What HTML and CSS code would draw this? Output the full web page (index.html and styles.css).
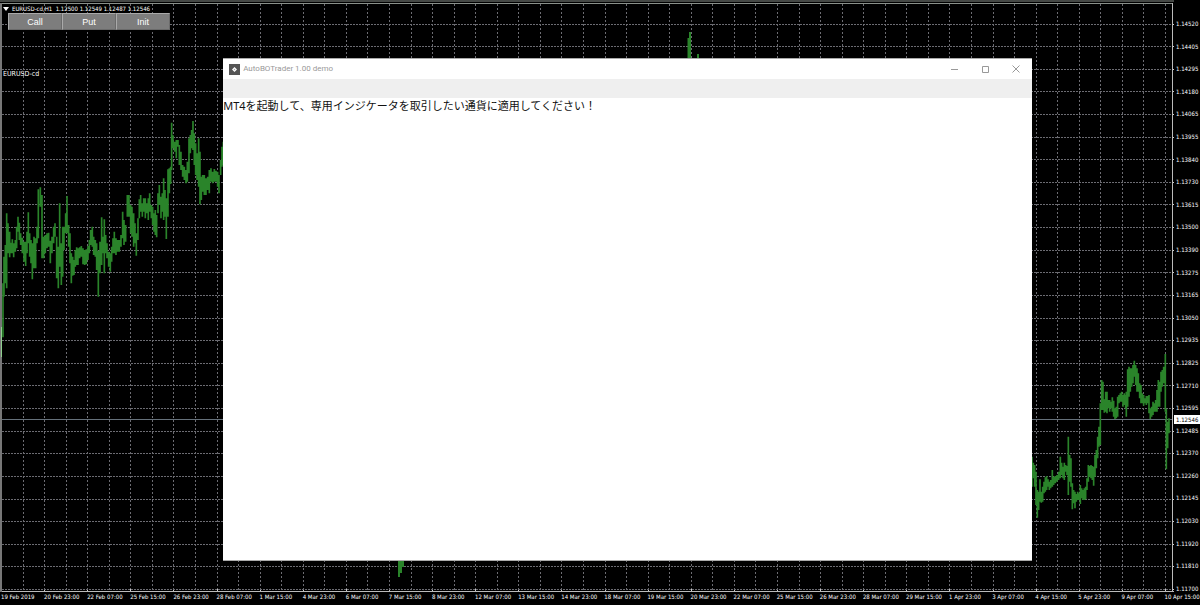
FILE: index.html
```html
<!DOCTYPE html>
<html lang="ja">
<head>
  <meta charset="UTF-8">
  <meta name="viewport" content="width=device-width, initial-scale=1.0">
  <title>AutoBOTrader 1.00 demo</title>
  <link rel="stylesheet" href="styles.css">
</head>
<body>
  <main class="terminal">
    <svg class="plot" viewBox="0 0 1174 592" preserveAspectRatio="none" aria-hidden="true">
      <g id="grid"></g>
      <path class="price-line" d="M2 419.5H1173"/>

      <!-- H1 bars, left part -->
      <g class="bars" transform="translate(0 110) scale(.3333)">
        <path d="M9 520V682M12 440V560M16 405V520M20 310V535M24 340V430M29 365V442M33 398V430M37 388V430M41 400V442M46 390V425M50 350V415M54 320V365M58 338V390M62 370V405M67 383V430M72 395V455M77 395V468M81 365V430M85 307V400M89 370V440M93 390V460M97 400V508M102 380V475M107 385V475M111 350V400M115 238V385M121 232V290M126 255V445M131 380V445M136 375V430M141 370V415M146 368V410M151 392V460M156 380V430M161 350V400M165 340V380M170 380V505M175 410V535M179 280V470M184 400V525M188 350V500M192 350V420M197 310V370M201 258V370M206 345V410M210 370V460M214 430V520M218 440V497M222 450V495M226 420V470M230 412V465M234 415V465M239 412V445M244 408V440M249 415V463M254 420V465M259 418V463M264 408V450M268 390V430M272 360V405M277 350V410M281 380V435M286 390V440M290 400V480M295 422V560M300 395V490M305 322V465M309 380V430M313 328V490M317 375V430M321 400V445M326 425V470M331 430V485M335 410V455M339 385V430M343 365V430M348 385V435M353 390V425M358 390V425M363 375V410M368 305V385M372 330V405M377 345V395M382 255V320M387 255V320M392 285V370M396 290V380M401 310V410M405 340V400M409 370V437M414 325V390M418 268V325M422 255V305M427 280V320M431 265V305M436 265V325M440 280V310M445 265V330M449 250V305M454 285V325M458 290V345M462 310V365M466 300V375M470 315V382M474 250V310M478 225V285M483 260V325M487 250V305M491 205V330M495 240V320M499 265V387M504 178V320M508 175V250M512 170V222M515 38V180M519 76V115M524 95V125M529 90V145M534 90V110M538 105V165M543 125V180M548 165V200M553 170V210M558 180V220M562 155V215M567 85V190M571 75V130M575 60V115M579 33V120M583 70V165M587 100V195M591 130V210M596 85V230M600 125V283M604 200V270M608 195V245M613 195V255M618 205V255M623 200V240M628 180V250M633 175V215M638 185V220M643 177V215M648 182V215M653 185V230M657 195V250M662 150V195M666 110V170M670 95V165"/>
      </g>

      <!-- H1 bars that stick out above and below the trader window -->
      <g class="bars">
        <path d="M688.5 38V60M690 32V60M698 54V60"/>
        <path d="M399 560V577M401 560V573M403 560V567"/>
      </g>

      <!-- H1 bars, right part -->
      <g class="bars" transform="translate(1020 340) scale(.3333)">
        <path d="M36 350V440M40 368V415M44 375V440M48 395V495M52 450V533M56 455V510M60 418V485M64 455V488M68 440V485M72 425V460M76 412V455M80 408V450M84 418V440M88 425V450M92 420V445M97 390V440M101 410V435M106 408V430M111 405V425M116 395V420M121 350V415M125 368V405M129 380V415M133 368V420M137 375V395M141 378V405M145 290V465M149 345V425M153 355V440M157 430V508M161 450V490M165 455V505M169 462V485M173 455V480M177 460V480M181 435V492M185 445V475M189 450V480M193 445V480M197 440V478M201 415V450M205 375V425M209 378V410M213 375V415M217 378V420M221 380V437M225 345V410M229 330V385M233 290V355M237 260V320M241 190V315M245 120V210M249 125V210M253 178V218M257 155V215M261 155V220M265 180V205M269 180V215M273 185V205M277 172V215M281 182V230M285 205V237M289 200V235M293 170V230M297 165V190M301 160V185M305 155V185M309 165V200M313 160V195M317 165V205M319 155V230M323 88V200M327 80V170M331 85V155M335 85V140M339 75V130M343 62V110M347 75V135M351 85V155M355 100V155M359 130V175M363 135V190M367 160V190M371 165V197M375 175V190M379 168V195M383 168V190M387 165V220M391 205V237M395 200V230M399 185V225M403 190V215M407 180V215M411 150V215M415 120V200M419 125V200M423 95V155M427 90V140M431 80V130M436 42V215M439 207V388M443 245V325M447 235V280"/>
      </g>

      <path class="frame-left" d="M1 3V592"/>
      <path class="first-bar" d="M1.5 327V357"/>
      <path class="frame-top" d="M0 1H1174M2 3.5H1173"/>
      <path class="frame-axis" d="M1172.5 3V592M2 591.5H1174"/>
    </svg>

    <div class="price-axis">
      <span>1.14520</span><span>1.14405</span><span>1.14295</span><span>1.14180</span><span>1.14065</span>
      <span>1.13955</span><span>1.13840</span><span>1.13730</span><span>1.13615</span><span>1.13500</span>
      <span>1.13390</span><span>1.13275</span><span>1.13165</span><span>1.13050</span><span>1.12935</span>
      <span>1.12825</span><span>1.12710</span><span>1.12595</span><span>1.12485</span><span>1.12370</span>
      <span>1.12260</span><span>1.12145</span><span>1.12030</span><span>1.11920</span><span>1.11810</span>
      <span>1.11700</span>
      <strong class="current-price">1.12546</strong>
    </div>

    <div class="time-axis">
      <span>19 Feb 2019</span><span>20 Feb 23:00</span><span>22 Feb 07:00</span><span>25 Feb 15:00</span>
      <span>26 Feb 23:00</span><span>28 Feb 07:00</span><span>1 Mar 15:00</span><span>4 Mar 23:00</span>
      <span>6 Mar 07:00</span><span>7 Mar 15:00</span><span>8 Mar 23:00</span><span>12 Mar 07:00</span>
      <span>13 Mar 15:00</span><span>14 Mar 23:00</span><span>18 Mar 07:00</span><span>19 Mar 15:00</span>
      <span>20 Mar 23:00</span><span>22 Mar 07:00</span><span>25 Mar 15:00</span><span>26 Mar 23:00</span>
      <span>28 Mar 07:00</span><span>29 Mar 15:00</span><span>1 Apr 23:00</span><span>3 Apr 07:00</span>
      <span>4 Apr 15:00</span><span>5 Apr 23:00</span><span>9 Apr 07:00</span><span>10 Apr 15:00</span>
    </div>

    <div class="chart-overlay">
      <div class="chart-title">
        <svg width="6" height="4" viewBox="0 0 6 4" aria-hidden="true"><path d="M0 0H6L3 4Z" fill="#fff"/></svg>
        <span>EURUSD-cd,H1&nbsp; 1.12500 1.12549 1.12487 1.12546</span>
      </div>
      <div class="chart-buttons">
        <button type="button">Call</button>
        <button type="button">Put</button>
        <button type="button">Init</button>
      </div>
      <div class="symbol">EURUSD-cd</div>
    </div>
  </main>

  <section class="window">
    <header class="titlebar">
      <svg class="app-icon" width="11" height="11" viewBox="0 0 11 11" aria-hidden="true">
        <rect width="11" height="11" fill="#555"/>
        <path d="M5.5 3L8 5.5L5.5 8L3 5.5Z" fill="#fff"/>
        <path d="M5.5 4.8V6.2M4.8 5.5H6.2" stroke="#999" stroke-width=".6"/>
      </svg>
      <h1>AutoBOTrader 1.00 demo</h1>
      <div class="window-controls">
        <button type="button" aria-label="Minimize">
          <svg width="8" height="8" viewBox="0 0 8 8"><path d="M1 4.5H8"/></svg>
        </button>
        <button type="button" aria-label="Maximize">
          <svg width="8" height="8" viewBox="0 0 8 8"><path d="M1.5 1.5H7.5V7.5H1.5Z"/></svg>
        </button>
        <button type="button" aria-label="Close">
          <svg width="8" height="8" viewBox="0 0 8 8"><path d="M.5 .5L7.5 7.5M7.5 .5L.5 7.5"/></svg>
        </button>
      </div>
    </header>
    <div class="toolbar"></div>
    <p class="message">MT4を起動して、専用インジケータを取引したい通貨に適用してください！</p>
  </section>

  <script src="script.js"></script>
</body>
</html>
```
FILE: styles.css
```css
* {
  box-sizing: border-box;
}

body {
  margin: 0;
  height: 100vh;
  position: relative;
  overflow: hidden;
  background: #000;
  color: #fff;
  font-family: "DejaVu Sans Condensed", "Noto Sans", sans-serif;
  font-size: 6px;
  line-height: 10px;
}

/* Chart */
.terminal {
  display: grid;
  grid-template-columns: 1fr 26px;
  grid-template-rows: 1fr 13px;
  height: 100%;
  position: relative;
}

.plot {
  grid-area: 1 / 1;
  width: 100%;
  height: 100%;
  min-height: 0;
}

.plot path {
  fill: none;
}

.grid-v,
.grid-h {
  stroke: #6c6c72;
  stroke-dasharray: 2 2;
}

.grid-h {
  stroke-dasharray: 2 1;
}

.tick {
  stroke: #ccc;
}

.bars {
  stroke: #2a842a;
  stroke-width: 5;
}

.bars:not([transform]) {
  stroke-width: 2;
}

.first-bar {
  stroke: #8fd08f;
}

.price-line {
  stroke: #65707a;
}

.frame-left {
  stroke: #777;
  stroke-width: 2;
}

.frame-top {
  stroke: #8a908a;
}

.frame-axis {
  stroke: #bbb;
}

.price-axis {
  grid-area: 1 / 2 / 3 / 3;
  position: relative;
  display: flex;
  flex-direction: column;
  justify-content: space-between;
  padding: 19px 0 11px 2px;
}

.current-price {
  position: absolute;
  top: 68.6%;
  left: 0;
  right: 0;
  padding-left: 2px;
  background: #fff;
  color: #000;
  font-weight: 400;
  line-height: 9px;
}

.time-axis {
  grid-area: 2 / 1 / 3 / 3;
  display: flex;
  overflow: hidden;
  white-space: nowrap;
  padding-left: 1px;
}

.time-axis span {
  flex: 0 0 3.595%;
}

.chart-overlay {
  position: absolute;
  top: 4px;
  left: 3px;
}

.chart-title {
  display: flex;
  align-items: center;
  gap: 3px;
}

.chart-buttons {
  display: flex;
  width: 162px;
  margin: -1px 0 39px 5px;
}

.chart-buttons button {
  flex: 1;
  height: 17px;
  padding: 0;
  border: 1px solid #6a6a6a;
  border-top-color: #aaa;
  border-left-color: #aaa;
  background: #7d7d7d;
  color: #fff;
  font: 9px/12px "Liberation Sans", sans-serif;
}

.symbol {
  font-size: 7px;
}

/* Trader window */
.window {
  position: absolute;
  top: 58px;
  left: 18.6%;
  width: 67.4%;
  height: 83.2%;
  background: #fff;
  border-top: 1px solid #aaa;
  border-bottom: 1px solid #aaa;
  color: #111;
}

.titlebar {
  display: flex;
  align-items: center;
  height: 20px;
  padding-left: 6px;
  gap: 3px;
}

.titlebar h1 {
  margin: 0;
  color: #999;
  font-family: Roboto, sans-serif;
  font-size: 8px;
  font-weight: 400;
}

.window-controls {
  display: flex;
  margin-left: auto;
}

.window-controls button {
  display: flex;
  align-items: center;
  justify-content: center;
  width: 31px;
  height: 20px;
  padding: 0;
  border: 0;
  background: none;
}

.window-controls path {
  fill: none;
  stroke: #999;
}

.toolbar {
  height: 19px;
  background: #efefef;
}

.message {
  margin: 0;
  font: 11px/16px "Noto Sans", "Noto Sans CJK JP", sans-serif;
}
```
FILE: script.js
```js
const grid = document.getElementById('grid');

function addLine(cls, d) {
  const path = document.createElementNS('http://www.w3.org/2000/svg', 'path');
  path.setAttribute('class', cls);
  path.setAttribute('d', d);
  grid.appendChild(path);
}

// one vertical line every 16 bars, a tick under every second one
for (let i = 0; i < 55; i++) {
  const x = Math.floor(1.5 + i * 21.556) + 0.5;
  addLine('grid-v', `M${x} 4V591`);
  if (i % 2 === 0) addLine('tick', `M${x} 589V592`);
}

// price levels
for (let i = 0; i < 26; i++) {
  const y = Math.floor(24 + i * 22.62) + 0.5;
  addLine('grid-h', `M2 ${y}H1172`);
  addLine('tick', `M1172 ${y}H1174`);
}
```
